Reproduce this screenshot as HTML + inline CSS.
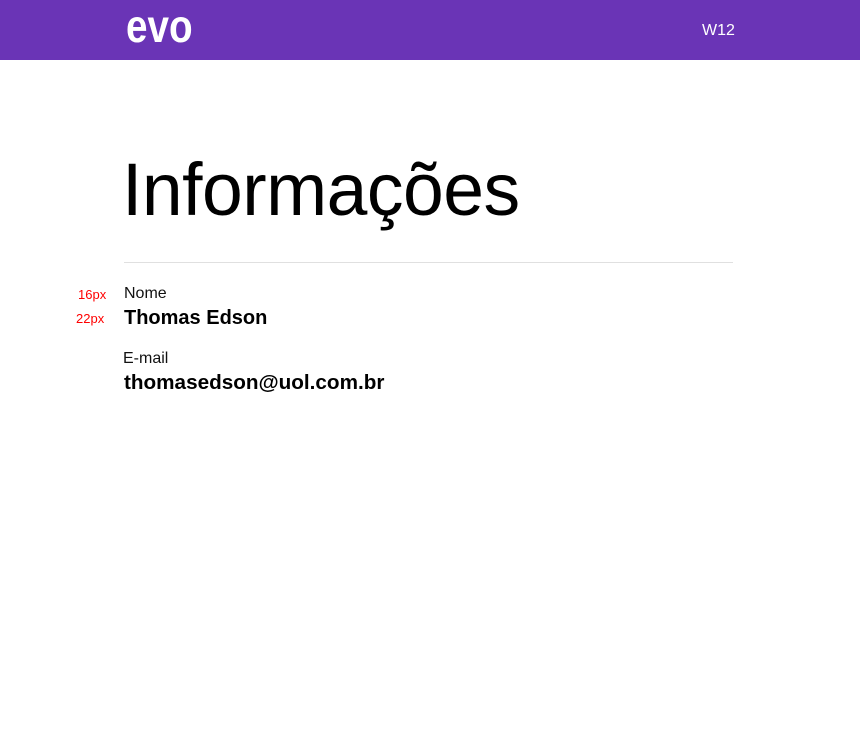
<!DOCTYPE html>
<html><head><meta charset="utf-8"><style>
*{margin:0;padding:0;box-sizing:border-box}
body{width:860px;height:750px;background:#fff;font-family:"Liberation Sans",sans-serif;position:relative;overflow:hidden}
.hdr{position:absolute;left:0;top:0;width:860px;height:60px;background:#6a34b6}
.logo{position:absolute;left:126px;top:3px;color:#fff;font-weight:bold;font-size:46px;line-height:46px;transform:scaleX(0.84);transform-origin:left}
.w12{position:absolute;left:702px;top:22px;color:#fff;font-size:16px}
h1{position:absolute;left:122px;top:148px;font-size:74px;font-weight:normal;color:#000;line-height:84px;letter-spacing:-0.5px;transform:scaleX(0.99);transform-origin:left}
.hr{position:absolute;left:124px;top:262px;width:609px;height:1px;background:#e0e0e0}
.t{position:absolute;white-space:nowrap}
.red{color:#f00;font-size:13px}
.lab{font-size:16px;color:#111}
.val{font-size:20px;font-weight:bold;color:#000}
</style></head><body>
<div class="hdr"><div class="logo">evo</div><div class="w12">W12</div></div>
<h1>Informações</h1>
<div class="hr"></div>
<div class="t red" style="left:78px;top:287px">16px</div>
<div class="t red" style="left:76px;top:311px">22px</div>
<div class="t lab" style="left:124px;top:285px">Nome</div>
<div class="t val" style="left:124px;top:307px">Thomas Edson</div>
<div class="t lab" style="left:123px;top:350px">E-mail</div>
<div class="t val" style="left:124px;top:371px;font-size:20.7px">thomasedson@uol.com.br</div>
</body></html>
